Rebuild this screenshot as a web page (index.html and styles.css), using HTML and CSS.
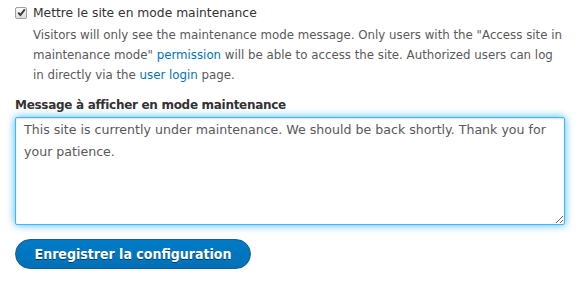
FILE: index.html
```html
<!DOCTYPE html>
<html>
<head>
<meta charset="utf-8">
<link rel="stylesheet" href="styles.css">
</head>
<body>
<div class="form">
  <div class="check-item">
    <label class="check-label"><span class="box"><svg width="9" height="9" viewBox="0 0 9 9"><path d="M1.2 4.6 L3.4 7 L7.8 1.4" fill="none" stroke="#3a3a3a" stroke-width="1.9"/></svg></span> Mettre le site en mode maintenance</label>
    <div class="description">Visitors will only see the maintenance mode message. Only users with the "Access site in maintenance mode" <a href="#">permission</a> will be able to access the site. Authorized users can log in directly via the <a href="#">user login</a> page.</div>
  </div>
  <div class="field">
    <label class="field-label">Message à afficher en mode maintenance</label>
    <textarea class="msg">This site is currently under maintenance. We should be back shortly. Thank you for your patience.</textarea>
  </div>
  <div class="actions">
    <button class="primary">Enregistrer la configuration</button>
  </div>
</div>
</body>
</html>
```
FILE: styles.css
```css
html, body { margin: 0; background: #fff; }
body {
  font-family: "DejaVu Sans", "Lucida Grande", sans-serif;
  color: #333;
  font-size: 13px;
}
.form { padding: 3px 15px 0 15px; width: 550px; }
.check-label {
  display: flex;
  align-items: center;
  gap: 6px;
  font-size: 12.3px;
  line-height: 20px;
  color: #333;
}
.box {
  box-sizing: border-box;
  width: 12px;
  height: 12px;
  border: 1px solid #a0a0a0;
  border-radius: 2px;
  background: linear-gradient(to bottom, #fcfcfc, #dcdcdc);
  display: flex;
  align-items: center;
  justify-content: center;
  margin-top: -1px;
}
.box svg { display: block; }
.description {
  margin-left: 18px;
  font-size: 11.8px;
  line-height: 20px;
  color: #595959;
  margin-top: 2px;
}
.description a { color: #0074bd; text-decoration: none; }
.field { margin-top: 11px; }
.field-label {
  display: block;
  font-weight: bold;
  font-size: 12px;
  letter-spacing: -0.3px;
  line-height: 18px;
  color: #333;
  margin-bottom: 3px;
}
.msg {
  display: block;
  box-sizing: border-box;
  width: 550px;
  height: 108px;
  border: 1px solid #40b6ff;
  border-radius: 2px;
  box-shadow: inset 0 1px 2px rgba(0,0,0,0.125), 0 0 8px #40b6ff;
  font-family: "DejaVu Sans", sans-serif;
  font-size: 12.6px;
  line-height: 22px;
  color: #595959;
  padding: 1px 8px;
  outline: none;
  resize: vertical;
}
.actions { margin-top: 14px; }
.primary {
  width: 236px;
  height: 30px;
  border-radius: 15px;
  border: 1px solid #1e5c90;
  background: linear-gradient(to bottom, #007bc6, #0071b8);
  color: #fff;
  font-family: "DejaVu Sans Condensed", "DejaVu Sans", sans-serif;
  font-stretch: condensed;
  font-weight: bold;
  font-size: 14px;
  text-shadow: 0 1px rgba(0,0,0,0.5);
  padding: 0;
}
```
